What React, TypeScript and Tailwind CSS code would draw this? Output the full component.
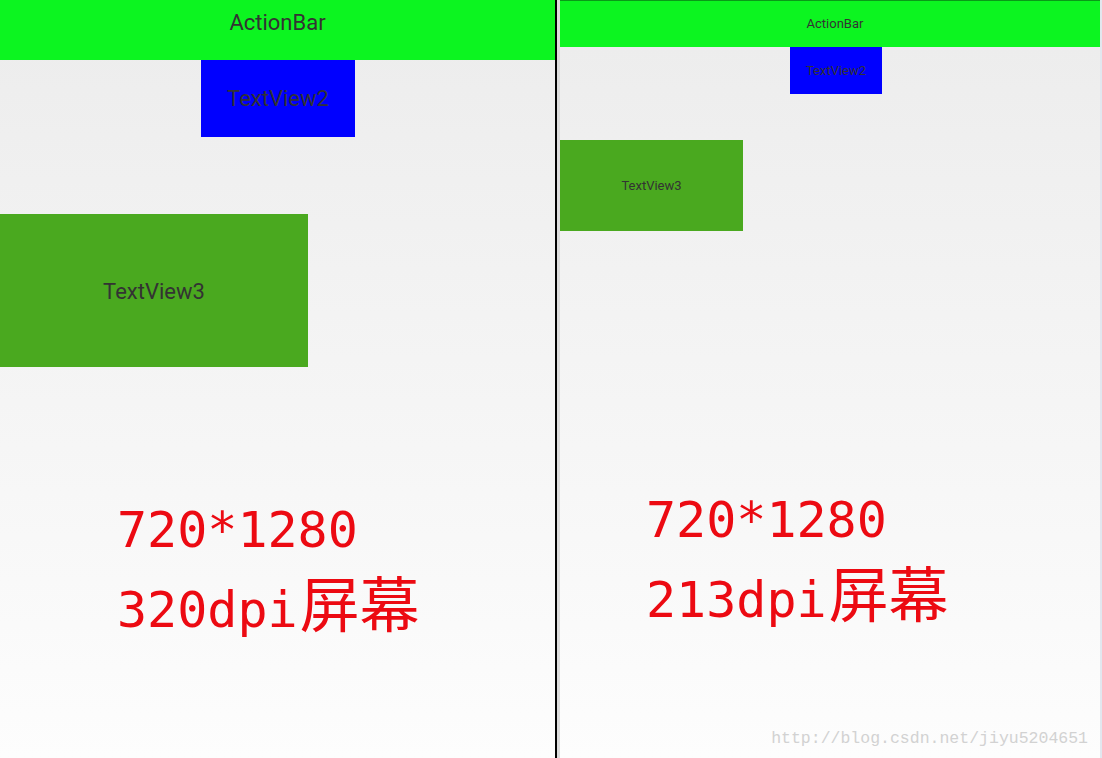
import React from 'react';

const roboto = { fontFamily: 'Roboto, "Noto Sans", sans-serif' };

const Caption: React.FC<{ line1: string; dpi: string }> = ({ line1, dpi }) => (
  <div className="text-[60px] text-[#ec0a12] whitespace-nowrap font-['Noto_Sans_CJK_SC',sans-serif]">
    <div className="h-[80px] leading-[80px]">
      <span className="font-['DejaVu_Sans_Mono',monospace] text-[50px] leading-none">{line1}</span>
    </div>
    <div className="h-[80px] leading-[80px]">
      <span className="font-['DejaVu_Sans_Mono',monospace] text-[50px] leading-none">{dpi}</span>
      <span className="ml-[2px] leading-none">屏幕</span>
    </div>
  </div>
);

export default function App() {
  return (
    <div className="relative w-[1102px] h-[758px] flex overflow-hidden bg-white" style={roboto}>
      {/* left phone: 320dpi */}
      <div className="w-[555px] h-full flex flex-col bg-linear-to-b from-[#ececec] to-[#fdfdfd]">
        <div className="h-[60px] bg-[#0cf520] flex justify-center pt-[8px]">
          <span className="text-[22px] text-[#333] leading-[30px]">ActionBar</span>
        </div>
        <div className="ml-[201px] w-[154px] h-[77px] bg-[#0000ff] flex items-center justify-center">
          <span className="text-[22px] text-[#333]">TextView2</span>
        </div>
        <div className="mt-[77px] w-[308px] h-[153px] bg-[#4aa91f] flex items-center justify-center pt-[2px]">
          <span className="text-[22px] text-[#333]">TextView3</span>
        </div>
        <div className="mt-[114px] ml-[117px]">
          <Caption line1="720*1280" dpi="320dpi" />
        </div>
      </div>

      <div className="w-[2px] h-full bg-black" />
      <div className="w-[3px] h-full bg-[#dcdcdc]" />

      {/* right phone: 213dpi */}
      <div className="flex-1 h-full flex flex-col bg-linear-to-b from-[#ececec] to-[#fdfdfd] border-r-[2px] border-[#e2e7ef]">
        <div className="h-[47px] bg-[#0cf520] border-t border-[#0a9a18] flex justify-center items-center pl-[10px]">
          <span className="text-[13px] text-[#333]">ActionBar</span>
        </div>
        <div className="ml-[230px] w-[92px] h-[47px] bg-[#0000ff] flex items-center justify-center">
          <span className="text-[13px] text-[#333]">TextView2</span>
        </div>
        <div className="mt-[46px] w-[183px] h-[91px] bg-[#4aa91f] flex items-center justify-center">
          <span className="text-[13px] text-[#333]">TextView3</span>
        </div>
        <div className="mt-[240px] ml-[86px]">
          <Caption line1="720*1280" dpi="213dpi" />
        </div>
      </div>

      <div className="absolute right-[14px] bottom-[9px] text-[16.5px] leading-[20px] text-[#d2d2d2] font-['Liberation_Mono',monospace]">
        http://blog.csdn.net/jiyu5204651
      </div>
    </div>
  );
}
